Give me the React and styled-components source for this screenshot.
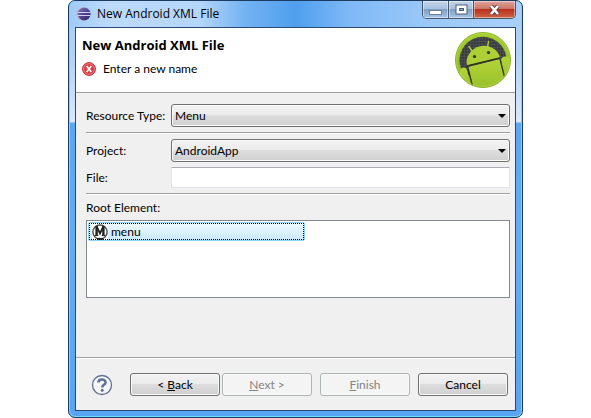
import React, { useState } from 'react';
import styled, { createGlobalStyle } from 'styled-components';

const EclipseIcon = () => (
  <svg width='16' height='16' viewBox='0 0 16 16' aria-hidden='true'>
    <defs>
      <linearGradient id='eclipse' x1='0' y1='0' x2='1' y2='1'>
        <stop offset='0' stopColor='#8d7fbd' />
        <stop offset='0.5' stopColor='#4d4391' />
        <stop offset='1' stopColor='#2a2264' />
      </linearGradient>
    </defs>
    <circle cx='7' cy='8' r='6.4' fill='#d9a6b8' />
    <circle cx='8.2' cy='8' r='6.4' fill='url(#eclipse)' />
    <path d='M2 6.5h12.6M2 9.5h12.6' stroke='#cfcdf0' strokeWidth='1' />
  </svg>
);

const AndroidIcon = () => (
  <svg width='56' height='56' viewBox='0 0 56 56' aria-hidden='true'>
    <defs>
      <linearGradient id='ring' x1='0' y1='0' x2='0' y2='1'>
        <stop offset='0' stopColor='#a9d02f' />
        <stop offset='1' stopColor='#86ae22' />
      </linearGradient>
      <linearGradient id='robot' x1='0' y1='0' x2='0' y2='1'>
        <stop offset='0' stopColor='#b2d438' />
        <stop offset='1' stopColor='#98c02a' />
      </linearGradient>
      <pattern id='mesh' width='3' height='3' patternUnits='userSpaceOnUse'>
        <rect width='3' height='3' fill='#3a3c3f' />
        <path d='M0 0h3M0 0v3' stroke='#54575a' strokeWidth='1' />
      </pattern>
      <clipPath id='disc'>
        <circle cx='28' cy='28' r='27' />
      </clipPath>
    </defs>
    <circle cx='28' cy='28' r='27.5' fill='url(#ring)' stroke='#8fb32c' />
    <path d='M6 36.5A23.5 23.5 0 1 1 51.4 26L48 36L14 44Z' fill='url(#mesh)' />
    <g clipPath='url(#disc)'>
      <path d='M5 39c0-4 6-5 7-1l5 20L3 49z' fill='url(#robot)' />
      <path d='M46 28c0-4 7-5 8-1l3 15-7 8z' fill='url(#robot)' />
      <path d='M13 35L45 27L51 50L39 57H19Z' fill='url(#robot)' />
      <path d='M12 33.5A16.9 15.5 -14 0 1 45 25.5Z' fill='#abcf34' />
      <path d='M12 34L45 26' stroke='#30351b' strokeWidth='1.3' />
      <path d='M12.5 34L17.5 54M45 27L50 47' stroke='#30351b' strokeWidth='1.3' />
    </g>
    <path d='M14 14.5L17.5 19.5M33.5 9.5L32.5 15' stroke='#abcf34' strokeWidth='1.4' strokeLinecap='round' />
    <circle cx='19.5' cy='24.5' r='1.6' fill='#30351b' />
    <circle cx='33.5' cy='20.5' r='1.6' fill='#30351b' />
    <circle cx='28' cy='28' r='26.5' fill='none' stroke='#c0e05a' strokeOpacity='0.5' />
  </svg>
);

const ErrorIcon = () => (
  <svg width='14' height='14' viewBox='0 0 14 14' aria-hidden='true'>
    <circle cx='7' cy='7' r='6.4' fill='#dc3c46' stroke='#c4262f' />
    <circle cx='7' cy='7' r='5.4' fill='none' stroke='#ee8b8f' strokeWidth='0.8' />
    <path d='M4.7 4L9.3 10M9.3 4L4.7 10' stroke='#fff' strokeWidth='1.6' />
  </svg>
);

const MenuIcon = () => (
  <svg width='16' height='16' viewBox='0 0 16 16' aria-hidden='true'>
    <rect width='16' height='16' fill='#fff' />
    <circle cx='8' cy='8' r='7.1' fill='#fff' stroke='#555' strokeWidth='1.5' />
    <path d='M4.6 11.5V2M11.4 11.5V2' fill='none' stroke='#222' strokeWidth='2.4' />
    <path d='M4.4 2L8 9.5L11.6 2' fill='none' stroke='#222' strokeWidth='1.8' />
    <path d='M3 11.4h3.4M9.6 11.4H13' stroke='#222' strokeWidth='1' />
    <path d='M5 14.8h6' stroke='#222' strokeWidth='1.8' />
  </svg>
);

const HelpIcon = () => (
  <svg width='22' height='22' viewBox='0 0 22 22' aria-hidden='true'>
    <circle cx='11' cy='11' r='9.5' fill='#f6f7fa' stroke='#5f7092' strokeWidth='1.3' />
    <path
      d='M7.4 8.6C7.4 4.6 14.6 4.6 14.6 8.4C14.6 10.8 11.2 10.7 11.2 13.4'
      fill='none'
      stroke='#5f7398'
      strokeWidth='2.6'
    />
    <circle cx='11.2' cy='16.2' r='1.5' fill='#5f7398' />
  </svg>
);

const Picker = ({ id, label, options }) => (
  <>
    <Label htmlFor={id}>{label}</Label>
    <SelectBox>
      <Select id={id}>
        {options.map(option => (
          <option key={option}>{option}</option>
        ))}
      </Select>
      <Arrow width='8' height='4' viewBox='0 0 8 4' aria-hidden='true'>
        <path d='M0 0h8L4 4z' fill='#000' />
      </Arrow>
    </SelectBox>
  </>
);

const App = () => {
  const [fileName, setFileName] = useState('');

  return (
    <Page>
      <GlobalStyle />
      <Window>
        <TitleBar>
          <EclipseIcon />
          <WindowTitle>New Android XML File</WindowTitle>
          <WindowControls>
            <ControlButton aria-label='Minimize'>
              <svg width='13' height='12' viewBox='0 0 13 12'>
                <rect x='0.5' y='6.5' width='12' height='4' fill='#fff' stroke='#6e7f98' />
              </svg>
            </ControlButton>
            <ControlButton aria-label='Maximize'>
              <svg width='13' height='12' viewBox='0 0 13 12'>
                <rect x='1' y='1' width='11' height='9' fill='#fff' stroke='#4d5e78' />
                <rect x='4.5' y='4.5' width='4' height='2' fill='#7ea3cf' stroke='#4d5e78' />
              </svg>
            </ControlButton>
            <ControlButton aria-label='Close' $danger>
              <svg width='13' height='12' viewBox='0 0 13 12'>
                <path d='M3 2L10 10M10 2L3 10' stroke='#5e3a40' strokeWidth='4.4' />
                <path d='M3 2L10 10M10 2L3 10' stroke='#fff' strokeWidth='2.6' />
              </svg>
            </ControlButton>
          </WindowControls>
        </TitleBar>

        <Content>
          <Banner>
            <div>
              <Heading>New Android XML File</Heading>
              <Message>
                <ErrorIcon />
                Enter a new name
              </Message>
            </div>
            <AndroidIcon />
          </Banner>

          <Body>
            <Fields>
              <Picker id='type' label='Resource Type:' options={['Menu']} />
            </Fields>
            <Separator />
            <Fields>
              <Picker id='project' label='Project:' options={['AndroidApp']} />
              <Label htmlFor='file'>File:</Label>
              <TextInput id='file' type='text' value={fileName} onChange={e => setFileName(e.target.value)} />
            </Fields>
            <Separator />
            <ListLabel id='root-label'>Root Element:</ListLabel>
            <List role='listbox' aria-labelledby='root-label'>
              <ListItem role='option' aria-selected='true'>
                <MenuIcon />
                menu
              </ListItem>
            </List>
          </Body>

          <Footer>
            <HelpButton aria-label='Help'>
              <HelpIcon />
            </HelpButton>
            <ButtonPair>
              <Button>
                &lt; <u>B</u>ack
              </Button>
              <Button disabled>
                <u>N</u>ext &gt;
              </Button>
            </ButtonPair>
            <Button disabled>
              <u>F</u>inish
            </Button>
            <Button>Cancel</Button>
          </Footer>
        </Content>
      </Window>
    </Page>
  );
};

const GlobalStyle = createGlobalStyle`
  * {
    box-sizing: border-box;
  }

  body {
    margin: 0;
    background: #fff;
    color: #000;
    font-family: Lato, 'Open Sans', sans-serif;
    font-size: 12px;
    line-height: 16px;
  }

  button, input, select {
    font: inherit;
    color: inherit;
  }

  svg {
    display: block;
    flex: none;
  }
`;

const Page = styled.main`
  padding: 0 68px;
`;

const Window = styled.section`
  padding: 0 6px 6px;
  border: 1px solid #1d3a5f;
  border-radius: 7px;
  box-shadow: inset 0 0 0 1px #6fdcfb;
  background: linear-gradient(#a5cdf6 0, #b4d4f6 60px, #d9e8fa 121px, #5aa7f5 122px, #64abf5 240px, #58a4f2);
`;

const TitleBar = styled.header`
  display: flex;
  align-items: center;
  gap: 5px;
  height: 26px;
  margin: 0 -5px;
  padding: 0 5px 0 6px;
  border-radius: 6px 6px 0 0;
  background: linear-gradient(90deg, #a0cbf7, #bddafa 40px, #b4d6f9 130px, #74b2f2 175px, #4f9fee 50%, #7fb9f6 62%, #9cc9f9 80%, #a9d0fa);
`;

const WindowTitle = styled.h1`
  flex: 1;
  margin: 0;
  font-family: 'Open Sans', sans-serif;
  font-size: 12px;
  font-weight: 400;
`;

const WindowControls = styled.div`
  display: flex;
  align-self: flex-start;
  border: 1px solid #46566c;
  border-top: none;
  border-radius: 0 0 5px 5px;
  overflow: hidden;
`;

const ControlButton = styled.button`
  display: flex;
  align-items: center;
  justify-content: center;
  width: ${props => (props.$danger ? '42px' : '25px')};
  height: 17px;
  padding: 0;
  border: none;
  border-left: ${props => (props.$danger ? '1px solid #46566c' : 'none')};
  box-shadow: inset 0 0 0 1px rgba(255, 255, 255, 0.45);
  background: ${props =>
    props.$danger
      ? 'linear-gradient(#dda69b, #cf7668 45%, #b8311c 50%, #cd6548)'
      : 'linear-gradient(#c4d5e8, #a8c1de 45%, #809fc4 50%, #a5c6e6)'};

  & + & {
    border-left: 1px solid #46566c;
  }
`;

const Content = styled.div`
  border: 1px solid #294a73;
  background: #f0f0f0;
`;

const Banner = styled.div`
  display: flex;
  justify-content: space-between;
  padding: 4px 4px 4px 6px;
  border-bottom: 1px solid #a0a0a0;
  background: #fff;
`;

const Heading = styled.h2`
  margin: 5px 0 8px;
  font-family: 'Open Sans', sans-serif;
  font-size: 13px;
  font-weight: 700;
  line-height: 16px;
`;

const Message = styled.p`
  display: flex;
  align-items: center;
  gap: 7px;
  margin: 0;
`;

const Body = styled.div`
  padding: 11px 5px 59px 10px;
`;

const Fields = styled.div`
  display: grid;
  grid-template-columns: 80px 1fr;
  column-gap: 5px;
  row-gap: 5px;
  align-items: center;
`;

const Label = styled.label`
  white-space: nowrap;
`;

const SelectBox = styled.div`
  position: relative;
`;

const Select = styled.select`
  display: block;
  width: 100%;
  height: 23px;
  padding: 0 20px 0 3px;
  appearance: none;
  border: 1px solid #707070;
  border-radius: 3px;
  box-shadow: inset 0 0 0 1px #fafafa;
  background: linear-gradient(#f2f2f2, #ebebeb 48%, #dddddd 50%, #cfcfcf);
`;

const Arrow = styled.svg`
  position: absolute;
  top: 10px;
  right: 4px;
  pointer-events: none;
`;

const TextInput = styled.input`
  width: 100%;
  height: 21px;
  padding: 0 3px;
  border: 1px solid #e2e3ea;
  border-top-color: #abadb3;
  background: #fff;
`;

const Separator = styled.hr`
  margin: 5px 0;
  border: none;
  border-top: 1px solid #a0a0a0;
  border-bottom: 1px solid #fff;
  height: 2px;
`;

const ListLabel = styled.div`
  padding-bottom: 4px;
`;

const List = styled.ul`
  min-height: 78px;
  margin: 0;
  padding: 1px;
  border: 1px solid #828790;
  background: #fff;
  list-style: none;
`;

const ListItem = styled.li`
  display: flex;
  align-items: center;
  gap: 3px;
  width: 217px;
  height: 19px;
  padding: 0 3px;
  outline: 1px dotted #000;
  outline-offset: -2px;
  border: 1px solid #8fd3f5;
  border-radius: 2px;
  background: linear-gradient(#f0f9fe, #c9e9fb);
`;

const Footer = styled.footer`
  display: flex;
  align-items: center;
  gap: 8px;
  padding: 15px 7px 14px;
  border-top: 1px solid #a0a0a0;
  box-shadow: inset 0 1px #fff;
`;

const HelpButton = styled.button`
  margin-right: auto;
  padding: 0 8px;
  border: none;
  background: none;
`;

const ButtonPair = styled.div`
  display: flex;
  gap: 2px;
`;

const Button = styled.button`
  width: 90px;
  height: 23px;
  padding: 0;
  border: 1px solid #707070;
  border-radius: 3px;
  box-shadow: inset 0 0 0 1px #fafafa;
  background: linear-gradient(#f2f2f2, #ebebeb 48%, #dddddd 50%, #cfcfcf);

  &:disabled {
    color: #838383;
    border-color: #adb2b5;
    background: #f4f4f4;
  }
`;

export default App;
